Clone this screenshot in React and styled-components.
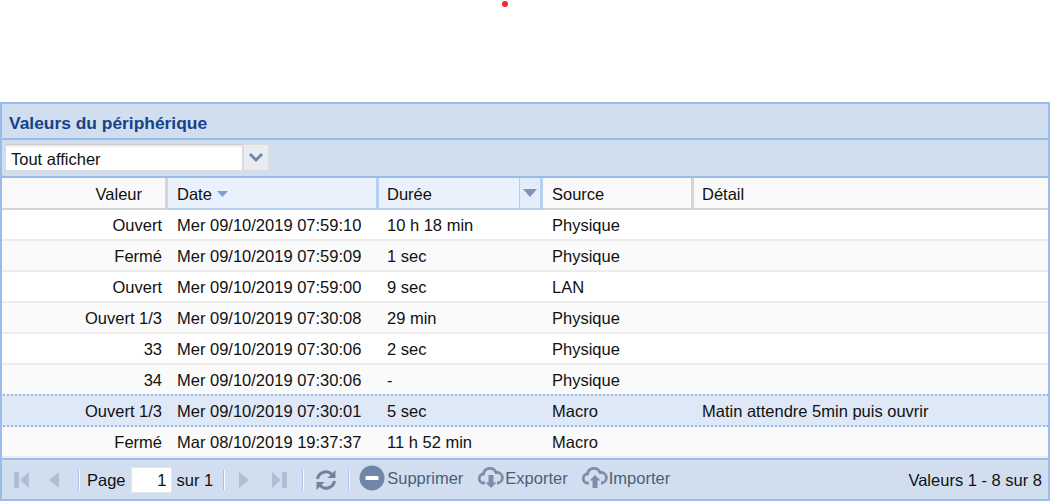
import React from "react";
import styled, { createGlobalStyle } from "styled-components";

const Global = createGlobalStyle`
  html, body { margin: 0; padding: 0; background: #fff; overflow: hidden; }
  body { font-family: "Liberation Sans", Arial, sans-serif; font-size: 16.5px; color: #111; }
`;
const COLS = "166px 211px 164px 151px 1fr";
const Top = styled.div`height: 102px; padding: 1px 0 0 502px; box-sizing: border-box;`;
const Dot = styled.div`width: 6px; height: 6px; border-radius: 50%; background: #ec2a2a;`;
const Panel = styled.div`
  width: 1050px; height: 399px; box-sizing: border-box; border: 2px solid #99bce8; background: #fff;
  display: flex; flex-direction: column;
`;
const Title = styled.div`
  height: 34px; flex: none; background: #d1deef; color: #15428b; font-weight: bold; font-size: 17.4px;
  padding: 5px 7px 0; display: flex; align-items: center; box-sizing: border-box;
`;
const FilterBar = styled.div`
  height: 40px; flex: none; box-sizing: border-box; background: #d1deef;
  border-top: 2px solid #99bce8; border-bottom: 2px solid #99bce8;
  padding: 4px 0 0 3px; display: flex; align-items: flex-start;
`;
const Combo = styled.div`
  width: 238px; height: 27px; box-sizing: border-box; background: #fff; border: 1px solid #dcdcdc; border-top-color: #ccc;
  padding: 4px 5px 0; display: flex; align-items: center; box-shadow: inset 0 2px 2px #eee;
`;
const ComboBtn = styled.div`
  width: 26px; height: 27px; box-sizing: border-box; background: #e9edf2; border: 1px solid #dcdcdc;
  display: flex; align-items: center; justify-content: center;
`;
const Header = styled.div`
  height: 32px; flex: none; display: grid; grid-template-columns: ${COLS}; box-sizing: border-box;
  & > :nth-child(3), & > :nth-child(5) { padding-left: 8px; }
`;
const HeadCell = styled.div`
  box-sizing: border-box; height: 32px; padding: 2px ${p => (p.$right ? "23px" : "8px")} 0 ${p => (p.$right ? "0" : "9px")};
  display: flex; align-items: center; gap: 5px; justify-content: ${p => (p.$right ? "flex-end" : "flex-start")};
  background: ${p => (p.$active ? "#e8f1fc" : "#f9f9f9")};
  border-bottom: 2px solid ${p => (p.$active ? "#b7d0f0" : "#d5d5d5")};
  border-right: 3px solid ${p => (p.$active ? "#b7d0f0" : "#d5d5d5")};
  position: relative;
`;
const LastHead = styled(HeadCell)`border-right: 0;`;
const Trigger = styled.div`
  position: absolute; right: 0; top: 0; bottom: 0; width: 21px; box-sizing: border-box;
  border-left: 1px solid #b7d0f0; background: #e3edfa;
  display: flex; align-items: center; justify-content: center;
`;
const Rows = styled.div`flex: 1; display: flex; flex-direction: column; overflow: hidden;`;
const Row = styled.div`
  flex: none; box-sizing: border-box; display: grid; grid-template-columns: ${COLS};
  align-items: center; padding-top: 1px;
  background: ${p => (p.$selected ? "#dfe8f6" : p.$alt ? "#fafafa" : "#fff")};
  border-bottom: ${p => (p.$selected ? "2px dotted #99bce8" : "2px solid #ededed")};
  border-top: ${p => (p.$selected ? "2px dotted #99bce8" : "0")};
  border-left: ${p => (p.$selected ? "2px dotted #99bce8" : "0")};
  margin: ${p => (p.$selected ? "-2px 0 0 -2px" : "0")};
  height: ${p => (p.$selected ? "33px" : "31px")};
  & > :nth-child(3), & > :nth-child(5) { padding-left: 8px; }
`;
const Cell = styled.div`
  padding: 0 ${p => (p.$right ? "6px" : "9px")}; text-align: ${p => (p.$right ? "right" : "left")};
  white-space: nowrap;
`;
const Footer = styled.div`
  height: 41px; flex: none; box-sizing: border-box; background: #d1deef; border-top: 2px solid #99bce8;
  display: flex; align-items: center; padding: 1px 6px 0 11px;
`;
const Sep = styled.div`width: 1px; height: 20px; background: #f6f9fd; border-left: 1px solid #a9c4ea; margin: 0 ${p => p.$m || 0}px 0 ${p => p.$ml || 0}px;`;
const Label = styled.span`color: ${p => (p.$muted ? "#4b5f7a" : "#111")}; white-space: nowrap; margin-left: ${p => p.$ml || 0}px;`;
const PageInput = styled.div`
  width: 41px; height: 26px; box-sizing: border-box; background: #fff; border: 1px solid #e3e6ea; margin: 0 5px;
  display: flex; align-items: center; justify-content: flex-end; padding-right: 4px;
`;
const IconBtn = styled.div`display: flex; align-items: center; width: ${p => p.$w}px; justify-content: center; flex: none;`;
const Action = styled.div`display: flex; align-items: center; gap: ${p => p.$gap || 1}px; margin: 0 14px 0 ${p => p.$ml || 0}px; padding-bottom: 4px;`;
const Spacer = styled.div`flex: 1;`;

const data = [
  ["Ouvert", "Mer 09/10/2019 07:59:10", "10 h 18 min", "Physique", ""],
  ["Fermé", "Mer 09/10/2019 07:59:09", "1 sec", "Physique", ""],
  ["Ouvert", "Mer 09/10/2019 07:59:00", "9 sec", "LAN", ""],
  ["Ouvert 1/3", "Mer 09/10/2019 07:30:08", "29 min", "Physique", ""],
  ["33", "Mer 09/10/2019 07:30:06", "2 sec", "Physique", ""],
  ["34", "Mer 09/10/2019 07:30:06", "-", "Physique", ""],
  ["Ouvert 1/3", "Mer 09/10/2019 07:30:01", "5 sec", "Macro", "Matin attendre 5min puis ouvrir"],
  ["Fermé", "Mar 08/10/2019 19:37:37", "11 h 52 min", "Macro", ""],
];

const Nav = ({ dir, bar }) => (
  <svg width="16" height="18" viewBox="0 0 16 18" fill="#b0bfd6">
    {dir === "l" ? <path d={bar ? "M15 1v16L6 9z" : "M13 1v16L3 9z"} /> : <path d={bar ? "M1 1v16l9-8z" : "M3 1v16l10-8z"} />}
    {bar && (dir === "l" ? <rect x="0" y="1" width="5" height="16" /> : <rect x="11" y="1" width="5" height="16" />)}
  </svg>
);
const Caret = ({ c = "#7ba0d8", w = 12, h = 6 }) => (
  <svg width={w} height={h} viewBox="0 0 12 6" preserveAspectRatio="none"><path d="M0 0h12L6 6z" fill={c} /></svg>
);
const Cloud = ({ up }) => (
  <svg width="26" height="24" viewBox="0 0 26 24">
    <path d="M7 17H6a4.500 4.500 0 0 1-.5-9A6.500 6.500 0 0 1 18 6.500 5.200 5.200 0 0 1 20 17h-1" fill="none" stroke="#7d8ea8" strokeWidth="2.800" />
    {up
      ? <path d="M13 9l5.500 5.500H15.500V22h-5v-7.500H7.500z" fill="#7d8ea8" />
      : <path d="M10.500 9h5v7.500h3L13 22l-5.500-5.500h3z" fill="#7d8ea8" />}
  </svg>
);

export default function App() {
  return (
    <>
      <Global />
      <Top><Dot /></Top>
      <Panel>
        <Title>Valeurs du périphérique</Title>
        <FilterBar>
          <Combo>Tout afficher</Combo>
          <ComboBtn>
            <svg width="16" height="10" viewBox="0 0 16 10"><path d="M2 1l6 6 6-6" fill="none" stroke="#7489a8" strokeWidth="3" /></svg>
          </ComboBtn>
        </FilterBar>
        <Header>
          <HeadCell $right>Valeur</HeadCell>
          <HeadCell $active>Date <Caret w={11} /></HeadCell>
          <HeadCell $active>Durée<Trigger><Caret c="#7f93b2" w={14} h={8} /></Trigger></HeadCell>
          <HeadCell>Source</HeadCell>
          <LastHead>Détail</LastHead>
        </Header>
        <Rows>
          {data.map((r, i) => (
            <Row key={i} $alt={i % 2 === 1} $selected={i === 6}>
              <Cell $right>{r[0]}</Cell>
              <Cell>{r[1]}</Cell>
              <Cell>{r[2]}</Cell>
              <Cell>{r[3]}</Cell>
              <Cell>{r[4]}</Cell>
            </Row>
          ))}
        </Rows>
        <Footer>
          <IconBtn $w={17}><Nav dir="l" bar /></IconBtn>
          <IconBtn $w={48}><Nav dir="l" /></IconBtn>
          <Sep />
          <Label $ml={7}>Page</Label>
          <PageInput>1</PageInput>
          <Label>sur 1</Label>
          <Sep $ml={10} />
          <IconBtn $w={38}><Nav dir="r" /></IconBtn>
          <IconBtn $w={32}><Nav dir="r" bar /></IconBtn>
          <Sep $ml={7} />
          <IconBtn $w={44}>
            <svg width="24" height="22" viewBox="0 0 24 22" fill="none">
              <path d="M3.500 10A8.500 8.500 0 0 1 18 5.500" stroke="#71829b" strokeWidth="3" />
              <path d="M20.500 12A8.500 8.500 0 0 1 6 16.500" stroke="#71829b" strokeWidth="3" />
              <path d="M21.500 1v8h-8z M2.500 21v-8h8z" fill="#71829b" />
            </svg>
          </IconBtn>
          <Sep />
          <Action $ml={9} $gap={2}>
            <svg width="26" height="26" viewBox="0 0 26 26"><circle cx="13" cy="13" r="12.500" fill="#6f86a8" /><rect x="6.500" y="11" width="13" height="4" fill="#fff" rx="1" /></svg>
            <Label $muted>Supprimer</Label>
          </Action>
          <Action $ml={1}><Cloud /><Label $muted>Exporter</Label></Action>
          <Action><Cloud up /><Label $muted>Importer</Label></Action>
          <Spacer />
          <Label>Valeurs 1 - 8 sur 8</Label>
        </Footer>
      </Panel>
    </>
  );
}
